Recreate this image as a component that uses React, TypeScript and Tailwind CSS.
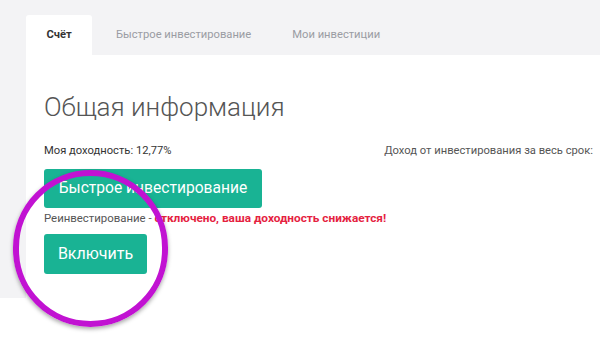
import React from 'react'

export default function App() {
  return (
    <div className="relative w-[600px] h-[337px] overflow-hidden bg-white font-['Roboto',sans-serif]">
      <div className="h-[298px] bg-[#f3f3f5] pl-[26px] flex flex-col">
        {/* Tabs */}
        <div className="flex h-[55px] pt-[15px] items-stretch text-[11.2px]">
          <div className="w-[66px] bg-white rounded-t-[3px] flex items-center justify-center font-bold text-[#333]">
            Счёт
          </div>
          <div className="px-[24px] flex items-center text-[#9a9ca3]">Быстрое инвестирование</div>
          <div className="px-[17px] flex items-center text-[#9a9ca3]">Мои инвестиции</div>
        </div>

        {/* Panel */}
        <div className="flex-1 bg-white pl-[18px] pr-[7px] pt-[37px]">
          <h1 className="text-[26px] leading-[30px] font-light text-[#555]">Общая информация</h1>
          <div className="mt-[22px] flex justify-between text-[11.2px] leading-[14px] text-[#333]">
            <span>Моя доходность: 12,77%</span>
            <span className="text-[#555]">Доход от инвестирования за весь срок:</span>
          </div>
          <button className="mt-[11px] h-[39px] w-[218px] rounded-[3px] bg-[#19b394] text-white text-[15.6px]">
            Быстрое инвестирование
          </button>
          <div className="mt-[2px] text-[11.4px] leading-[16px] text-[#555]">
            Реинвестирование -{' '}
            <span className="font-bold text-[#e5223f] text-[11.8px]">отключено, ваша доходность снижается!</span>
          </div>
          <button className="mt-[8px] h-[40px] w-[103px] rounded-[3px] bg-[#19b394] text-white text-[16px]">
            Включить
          </button>
        </div>
      </div>

      {/* Annotation circle */}
      <div className="absolute left-[13px] top-[170px] w-[155px] h-[157px] rounded-full border-[6px] border-[#c112d2] shadow-[0_2px_4px_rgba(0,0,0,0.35)]" />
    </div>
  )
}
